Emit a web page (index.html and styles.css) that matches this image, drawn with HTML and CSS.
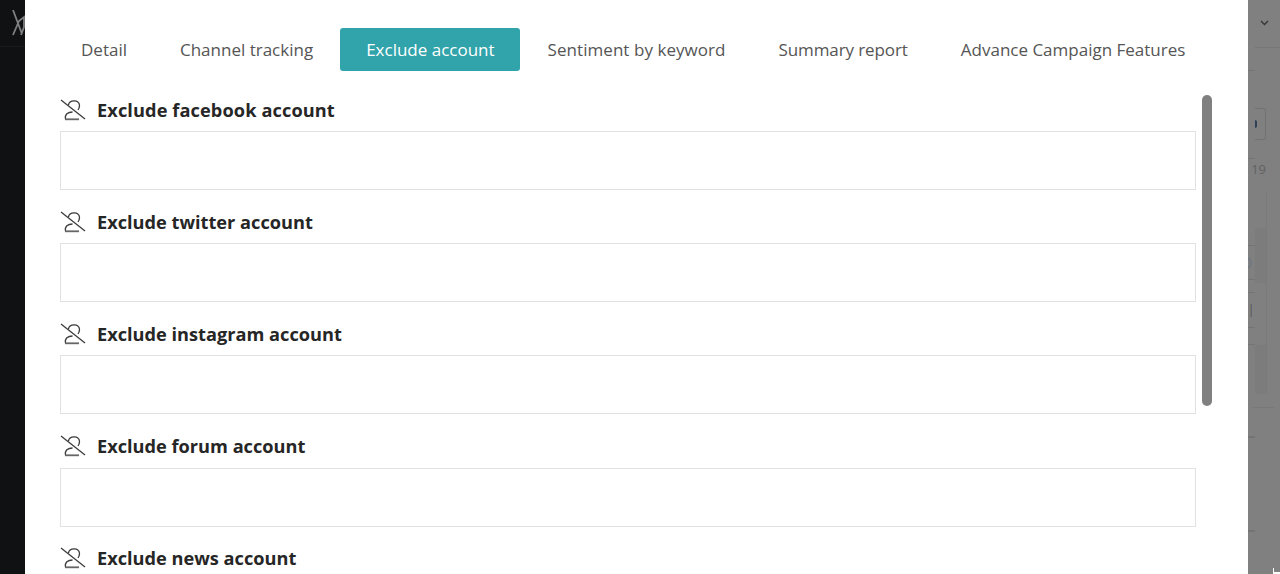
FILE: index.html
```html
<!DOCTYPE html>
<html lang="en">
<head>
<meta charset="utf-8">
<title>Exclude account</title>
<link rel="stylesheet" href="styles.css">
</head>
<body>
<svg class="defs" width="0" height="0" aria-hidden="true">
  <symbol id="user-off" viewBox="0 0 26 22">
    <g fill="none" stroke="#3c3c3c" stroke-width="1.3">
      <path d="M1 1 L25 20"/>
      <path d="M8.5 6 C9 1 19.5 0 19.5 6.5 C19.5 8.5 19 9.5 18 11"/>
      <path d="M5.5 20 C4.5 15.5 8 13 12.500 13"/>
      <path d="M5 20.300 H19" stroke="#666" stroke-width="1.800"/>
    </g>
  </symbol>
</svg>
<div class="page">
  <aside class="left-strip">
    <svg class="logo" width="13" height="28" viewBox="0 0 13 28" fill="none" stroke="#808080" stroke-width="1.8">
      <path d="M1 0 L10 24 M1 25 L7 11 L12 7 L12 17 L9 25"/>
    </svg>
    <div class="left-rule"></div>
  </aside>
  <main class="modal">
    <nav class="tabs">
      <a class="tab">Detail</a>
      <a class="tab">Channel tracking</a>
      <a class="tab active">Exclude account</a>
      <a class="tab tab-wide">Sentiment by keyword</a>
      <a class="tab tab-tight">Summary report</a>
      <a class="tab">Advance Campaign Features</a>
    </nav>
    <div class="scroll-area">
      <section class="field">
        <h3 class="field-title title-wide"><svg class="user-off"><use href="#user-off"/></svg>Exclude facebook account</h3>
        <div class="box"></div>
      </section>
      <section class="field">
        <h3 class="field-title"><svg class="user-off"><use href="#user-off"/></svg>Exclude twitter account</h3>
        <div class="box"></div>
      </section>
      <section class="field">
        <h3 class="field-title"><svg class="user-off"><use href="#user-off"/></svg>Exclude instagram account</h3>
        <div class="box"></div>
      </section>
      <section class="field">
        <h3 class="field-title"><svg class="user-off"><use href="#user-off"/></svg>Exclude forum account</h3>
        <div class="box"></div>
      </section>
      <section class="field">
        <h3 class="field-title"><svg class="user-off"><use href="#user-off"/></svg>Exclude news account</h3>
        <div class="box"></div>
      </section>
      <div class="thumb"></div>
    </div>
  </main>
  <aside class="right-strip">
    <svg class="chevron" width="9" height="6" viewBox="0 0 9 6" fill="none" stroke="#333" stroke-width="1.3"><path d="M1 1 L4.500 4.500 L8 1"/></svg>
    <div class="rule"></div>
    <div class="tick tick-a"></div>
    <div class="pager"><span class="pager-dot"></span></div>
    <div class="tick tick-b"></div>
    <div class="num">19</div>
    <div class="lower">
      <div class="lower-left">
        <div class="tick tick-c"></div>
        <div class="clip clip-zero">0</div>
        <div class="tick tick-d"></div>
        <div class="tick tick-e"></div>
        <div class="clip clip-label">el<span class="caret">|</span></div>
        <div class="tick tick-f"></div>
        <div class="tick tick-g"></div>
      </div>
      <div class="lower-right">
        <div class="band band-a"></div>
        <div class="band band-b"></div>
      </div>
    </div>
    <div class="rule-short"></div>
    <div class="tick tick-thick tick-h"></div>
    <div class="tick tick-thick tick-i"></div>
    <div class="corner"></div>
  </aside>
</div>
</body>
</html>
```
FILE: styles.css
```css
* { box-sizing: border-box; }
html, body { margin: 0; height: 100%; }
body { font-family: "Open Sans", "Noto Sans", sans-serif; overflow: hidden; background: #808080; }
.defs { display: block; height: 0; }
.page { display: flex; height: 574px; overflow: hidden; }

.left-strip { width: 25px; flex: none; background: #101112; padding-top: 10px; }
.logo { display: block; margin-left: 12px; }
.left-rule { height: 1px; margin-top: 8px; background: #1a1b1c; }

.modal { width: 1223px; flex: none; background: #fff; display: flex; flex-direction: column; padding-top: 28px; }
.tabs { display: flex; gap: 1px; padding-left: 30px; height: 43px; flex: none; }
.tab { display: flex; align-items: center; padding: 0 26px; font-size: 17px; color: #555; border-radius: 3px; white-space: nowrap; }
.tab-tight { letter-spacing: -.1px; }
.tab-wide { letter-spacing: .05px; }
.tab.active { background: #31a3aa; color: #fff; padding-right: 25px; margin-right: 1px; }
.scroll-area { position: relative; flex: 1; overflow: hidden; padding: 24px 52px 0 35px; }
.field { height: 112.2px; }
.field-title { display: flex; align-items: center; margin: 0 0 7px; height: 29px; font-size: 18.2px; font-weight: 700; color: #262626; }
.title-wide { letter-spacing: .1px; }
.user-off { width: 26px; height: 22px; margin-right: 11px; flex: none; }
.box { height: 59px; border: 1px solid #e2e2e2; background: #fff; }
.thumb { position: absolute; left: 1177px; top: 24px; width: 10px; height: 311px; border-radius: 5px; background: #808080; }

.right-strip { flex: 1; min-width: 0; background: #808080; display: flex; flex-direction: column; align-items: flex-end; overflow: hidden; }
.chevron { flex: none; margin: 20px 11px 0 0; }
.rule { width: 25px; height: 1px; background: #767676; margin-top: 21px; flex: none; }
.tick { width: 7px; height: 1px; background: #747474; flex: none; align-self: flex-start; }
.tick-thick { height: 2px; }
.tick-a { margin-top: 22px; }
.pager { width: 11px; height: 32px; margin: 37px 14px 0 0; border: 1px solid #727272; border-left: 0; border-radius: 0 3px 3px 0; display: flex; align-items: center; flex: none; }
.pager-dot { width: 2px; height: 8px; background: #2f3f55; border-radius: 0 2px 2px 0; }
.tick-b { margin-top: 18px; }
.num { font-size: 13px; line-height: 14px; color: #626262; margin: 3px 14px 0 0; flex: none; }

.lower { display: flex; width: 100%; height: 204px; margin-top: 14px; flex: none; }
.lower-left { width: 7px; flex: none; display: flex; flex-direction: column; }
.lower-right { width: 12px; flex: none; border-right: 1px solid #7a7a7a; display: flex; flex-direction: column; }
.band { background: #7c7c7c; flex: none; }
.band-a { margin-top: 38px; height: 55px; }
.band-b { margin-top: 62px; height: 49px; }
.tick-c { margin-top: 55px; }
.clip { height: 14px; line-height: 14px; font-size: 14px; overflow: hidden; display: flex; justify-content: flex-end; flex: none; white-space: nowrap; }
.clip-zero { margin-top: 10px; padding-right: 3px; color: #6b7684; }
.tick-d { margin-top: 9px; }
.tick-e { margin-top: 12px; }
.clip-label { margin-top: 10px; color: #666; }
.caret { color: #5a5a5a; }
.tick-f { margin-top: 10px; }
.tick-g { margin-top: 16px; }

.rule-short { width: 21px; height: 1px; background: #787878; margin: 13px 6px 0 0; flex: none; }
.tick-h { margin-top: 28px; }
.tick-i { margin-top: 92px; }
.corner { width: 7px; height: 6px; margin: 36px 0 0 0; border-left: 1px solid #fff; border-bottom: 2px solid #fff; flex: none; }
```
